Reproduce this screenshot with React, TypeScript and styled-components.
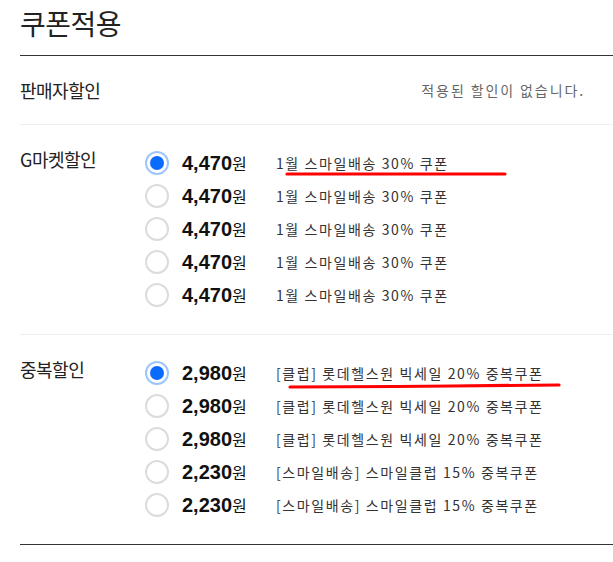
import React from "react";
import styled, { createGlobalStyle } from "styled-components";

const GlobalStyle = createGlobalStyle`
  body {
    margin: 0;
    background: #fff;
    font-family: "Noto Sans CJK KR", "Noto Sans", sans-serif;
    color: #222;
  }
`;

type Coupon = { price: string; name: string; checked?: boolean; mark?: number[][] };

const gmarket: Coupon[] = [
  { price: "4,470", name: "1월 스마일배송 30% 쿠폰", checked: true, mark: [[11, 6], [229, 6]] },
  { price: "4,470", name: "1월 스마일배송 30% 쿠폰" },
  { price: "4,470", name: "1월 스마일배송 30% 쿠폰" },
  { price: "4,470", name: "1월 스마일배송 30% 쿠폰" },
  { price: "4,470", name: "1월 스마일배송 30% 쿠폰" },
];

const duplicate: Coupon[] = [
  {
    price: "2,980",
    name: "[클럽] 롯데헬스원 빅세일 20% 중복쿠폰",
    checked: true,
    mark: [[14, 9], [120, 8.5], [176, 8], [283, 7]],
  },
  { price: "2,980", name: "[클럽] 롯데헬스원 빅세일 20% 중복쿠폰" },
  { price: "2,980", name: "[클럽] 롯데헬스원 빅세일 20% 중복쿠폰" },
  { price: "2,230", name: "[스마일배송] 스마일클럽 15% 중복쿠폰" },
  { price: "2,230", name: "[스마일배송] 스마일클럽 15% 중복쿠폰" },
];

export default function App() {
  return (
    <>
      <GlobalStyle />
      <Page>
        <Title>쿠폰적용</Title>
        <SellerRow>
          <Label>판매자할인</Label>
          <Notice>적용된 할인이 없습니다.</Notice>
        </SellerRow>
        <CouponGroup label="G마켓할인" coupons={gmarket} />
        <CouponGroup label="중복할인" coupons={duplicate} $last />
      </Page>
    </>
  );
}

const CouponGroup = ({
  label,
  coupons,
  $last,
}: {
  label: string;
  coupons: Coupon[];
  $last?: boolean;
}) => (
  <Section $last={$last}>
    <GroupLabel>{label}</GroupLabel>
    <List>
      {coupons.map((c, i) => (
        <Row key={i}>
          <Radio $checked={c.checked} />
          <Price>
            <Amount>{c.price}</Amount>
            <Won>원</Won>
          </Price>
          <Desc>{c.name}</Desc>
          {c.mark && (
            <Mark width="300" height="16" viewBox="0 0 300 16">
              <polyline
                points={c.mark.map((p) => p.join(",")).join(" ")}
                fill="none"
                stroke="#ff0000"
                strokeWidth="3.2"
                strokeLinecap="round"
                strokeLinejoin="round"
              />
            </Mark>
          )}
        </Row>
      ))}
    </List>
  </Section>
);

const Page = styled.div`
  padding-left: 20px;
`;

const Title = styled.h1`
  margin: 0;
  height: 55px;
  font-size: 28px;
  font-weight: 400;
  line-height: 46px;
  color: #222;
  border-bottom: 1px solid #333;
  letter-spacing: -0.5px;
`;

const SellerRow = styled.div`
  display: flex;
  align-items: center;
  justify-content: space-between;
  height: 68px;
  padding-right: 28px;
  border-bottom: 1px solid #eee;
`;

const Label = styled.div`
  font-size: 18px;
  color: #222;
  letter-spacing: -0.5px;
`;

const Notice = styled.div`
  font-size: 14px;
  color: #666;
  letter-spacing: 1.9px;
`;

const Section = styled.div<{ $last?: boolean }>`
  display: grid;
  grid-template-columns: 125px 1fr;
  padding: 21px 0 23px;
  border-bottom: 1px solid ${(p) => (p.$last ? "#333" : "#eee")};
`;

const GroupLabel = styled(Label)`
  line-height: 26px;
`;

const List = styled.div`
  display: flex;
  flex-direction: column;
`;

const Row = styled.div`
  position: relative;
  display: flex;
  align-items: center;
  height: 33px;
`;

const Radio = styled.span<{ $checked?: boolean }>`
  position: relative;
  box-sizing: border-box;
  width: 24px;
  height: 24px;
  margin-right: 13px;
  border-radius: 50%;
  border: 2px solid ${(p) => (p.$checked ? "#9fc6fb" : "#dcdcdc")};
  background: #fff;
  flex-shrink: 0;

  &::after {
    content: "";
    display: ${(p) => (p.$checked ? "block" : "none")};
    position: absolute;
    inset: 3px;
    border-radius: 50%;
    background: #0a6cff;
  }
`;

const Price = styled.div`
  width: 94px;
  display: flex;
  align-items: baseline;
  color: #111;
`;

const Amount = styled.span`
  font-family: "Liberation Sans", Arial, sans-serif;
  font-weight: 700;
  font-size: 20px;
`;

const Won = styled.span`
  font-size: 16px;
`;

const Desc = styled.div`
  font-size: 14px;
  color: #333;
  letter-spacing: 1.6px;
`;

const Mark = styled.svg`
  position: absolute;
  left: 131px;
  top: 22px;
  pointer-events: none;
`;
